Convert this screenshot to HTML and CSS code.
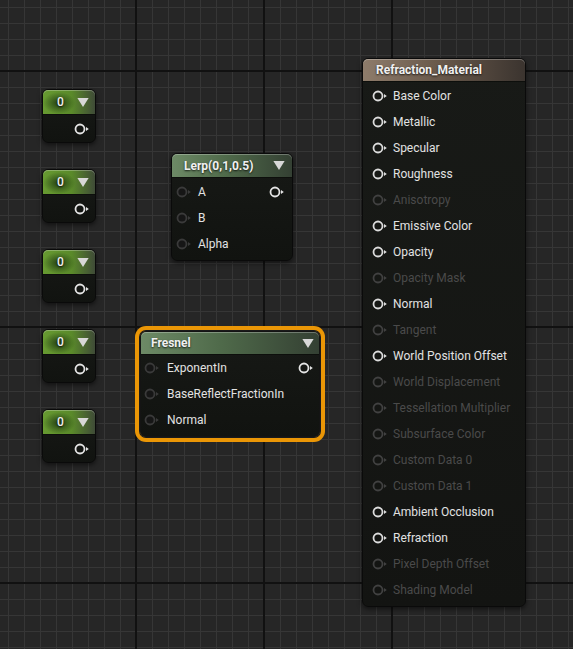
FILE: index.html
```html
<!DOCTYPE html>
<html lang="en">
<head>
    <meta charset="UTF-8">
    <title>Refraction_Material</title>
    <link rel="stylesheet" href="styles.css">
</head>
<body>
    <svg class="defs" width="0" height="0">
        <symbol id="pin" viewBox="0 0 16 12">
            <circle cx="6" cy="6" r="4.5" fill="var(--pin-fill, none)" stroke="currentColor" stroke-width="1.8"/>
            <polygon points="12,4 14.8,6 12,8" fill="currentColor"/>
        </symbol>
        <symbol id="arrow" viewBox="0 0 10 8">
            <polygon points="0,0 10,0 5,8" fill="currentColor"/>
        </symbol>
    </svg>

    <div class="graph">
        <!-- constants -->
        <div class="node const" style="left:42px; top:89px">
            <div class="head green"><span class="title">0</span><svg class="drop"><use href="#arrow"/></svg></div>
            <div class="body out-only"><svg class="pin on"><use href="#pin"/></svg></div>
        </div>
        <div class="node const" style="left:42px; top:169px">
            <div class="head green"><span class="title">0</span><svg class="drop"><use href="#arrow"/></svg></div>
            <div class="body out-only"><svg class="pin on"><use href="#pin"/></svg></div>
        </div>
        <div class="node const" style="left:42px; top:249px">
            <div class="head green"><span class="title">0</span><svg class="drop"><use href="#arrow"/></svg></div>
            <div class="body out-only"><svg class="pin on"><use href="#pin"/></svg></div>
        </div>
        <div class="node const" style="left:42px; top:329px">
            <div class="head green"><span class="title">0</span><svg class="drop"><use href="#arrow"/></svg></div>
            <div class="body out-only"><svg class="pin on"><use href="#pin"/></svg></div>
        </div>
        <div class="node const" style="left:42px; top:409px">
            <div class="head green"><span class="title">0</span><svg class="drop"><use href="#arrow"/></svg></div>
            <div class="body out-only"><svg class="pin on"><use href="#pin"/></svg></div>
        </div>

        <!-- lerp -->
        <div class="node func lerp">
            <div class="head sage"><span class="title">Lerp(0,1,0.5)</span><svg class="drop"><use href="#arrow"/></svg></div>
            <div class="body">
                <div class="row">
                    <div class="input"><svg class="pin off"><use href="#pin"/></svg><span>A</span></div>
                    <svg class="pin on"><use href="#pin"/></svg>
                </div>
                <div class="row"><div class="input"><svg class="pin off"><use href="#pin"/></svg><span>B</span></div></div>
                <div class="row"><div class="input"><svg class="pin off"><use href="#pin"/></svg><span>Alpha</span></div></div>
            </div>
        </div>

        <!-- fresnel (selected) -->
        <div class="node func fresnel selected">
            <div class="head sage"><span class="title">Fresnel</span><svg class="drop"><use href="#arrow"/></svg></div>
            <div class="body">
                <div class="row">
                    <div class="input"><svg class="pin off"><use href="#pin"/></svg><span>ExponentIn</span></div>
                    <svg class="pin on"><use href="#pin"/></svg>
                </div>
                <div class="row"><div class="input"><svg class="pin off"><use href="#pin"/></svg><span>BaseReflectFractionIn</span></div></div>
                <div class="row"><div class="input"><svg class="pin off"><use href="#pin"/></svg><span>Normal</span></div></div>
            </div>
        </div>

        <!-- material result -->
        <div class="node material">
            <div class="head brown"><span class="title">Refraction_Material</span></div>
            <div class="body" id="matInputs"></div>
        </div>
    </div>

    <script>
        const inputs = [
            ['Base Color', 1], ['Metallic', 1], ['Specular', 1], ['Roughness', 1],
            ['Anisotropy', 0], ['Emissive Color', 1], ['Opacity', 1], ['Opacity Mask', 0],
            ['Normal', 1], ['Tangent', 0], ['World Position Offset', 1], ['World Displacement', 0],
            ['Tessellation Multiplier', 0], ['Subsurface Color', 0], ['Custom Data 0', 0],
            ['Custom Data 1', 0], ['Ambient Occlusion', 1], ['Refraction', 1],
            ['Pixel Depth Offset', 0], ['Shading Model', 0]
        ];

        const list = document.getElementById('matInputs');
        inputs.forEach(([name, active]) => {
            const row = document.createElement('div');
            row.className = 'row' + (active ? '' : ' disabled');
            row.innerHTML = `<div class="input"><svg class="pin ring"><use href="#pin"/></svg><span>${name}</span></div>`;
            list.appendChild(row);
        });
    </script>
</body>
</html>
```

FILE: styles.css
```css
body {
    margin: 0;
    padding: 0;
    background: #262626;
    font-family: Roboto, "Liberation Sans", sans-serif;
    font-size: 12px;
    color: #e2e2e2;
    overflow: hidden;
}

.defs {
    position: absolute;
}

.graph {
    position: relative;
    width: 573px;
    height: 649px;
    background-color: #262626;
    background-image:
        linear-gradient(to right,
            transparent 135px, #111 135px, #111 137px, transparent 137px,
            transparent 263px, #111 263px, #111 265px, transparent 265px,
            transparent 391px, #111 391px, #111 393px, transparent 393px),
        linear-gradient(to bottom,
            transparent 70px, #111 70px, #111 72px, transparent 72px,
            transparent 326px, #111 326px, #111 328px, transparent 328px,
            transparent 582px, #111 582px, #111 584px, transparent 584px),
        linear-gradient(to right, #363636 1px, transparent 1px),
        linear-gradient(to bottom, #363636 1px, transparent 1px);
    background-size: 100% 100%, 100% 100%, 16px 16px, 16px 16px;
    background-position: 0 0, 0 0, 8px 0, 0 7px;
}

.node {
    position: absolute;
    display: flex;
    flex-direction: column;
    background: linear-gradient(to bottom, #171916, #111310);
    border: 1px solid #0a0a0a;
    border-radius: 6px;
    box-shadow: 0 2px 5px rgba(0, 0, 0, 0.55);
}

.head {
    height: 24px;
    display: flex;
    align-items: center;
    justify-content: space-between;
    border-radius: 5px 5px 0 0;
    box-shadow: inset 0 1px 0 rgba(255, 255, 255, 0.28);
    border-bottom: 1px solid #0d0f0c;
}

.title {
    font-weight: bold;
    color: #f0f0f0;
    text-shadow: 0 1px 2px rgba(0, 0, 0, 0.8);
}

.drop {
    width: 12px;
    height: 9px;
    color: #d8d8d8;
}

.green {
    background:
        radial-gradient(ellipse 16px 11px at 16px 13px, rgba(24, 48, 14, 0.85), transparent),
        linear-gradient(to right, #679a31, #5a8a2a 55%, #3f4b37);
}

.sage {
    background: linear-gradient(to right, #6d8a66, #4f6a4a 45%, #344033);
}

.brown {
    background: linear-gradient(to right, #8e7c6b, #6a5a4c 45%, #3b342f);
}

/* constants */
.const {
    width: 54px;
    height: 54px;
    box-sizing: border-box;
}

.const .head {
    padding: 0 6px 0 14px;
}

.const .title {
    font-weight: 500;
}

.out-only {
    flex: 1;
    display: flex;
    align-items: center;
    justify-content: flex-end;
    padding: 0 5px 0 0;
}

/* pins */
.pin {
    width: 16px;
    height: 12px;
    flex: none;
}

.pin.on {
    color: #e4e4e4;
}

.pin.off {
    color: #3a3a3a;
    --pin-fill: #161616;
}

.pin.ring {
    color: #dcdcdc;
}

.row {
    height: 26px;
    display: flex;
    align-items: center;
    justify-content: space-between;
}

.input {
    display: flex;
    align-items: center;
    gap: 6px;
}

/* lerp */
.lerp {
    left: 171px;
    top: 153px;
    width: 120px;
}

.lerp .head {
    height: 23px;
    padding: 0 7px 0 12px;
}

.lerp .body {
    padding: 1px 0 3px;
}

.lerp .row {
    padding: 0 7px 0 4px;
}

/* fresnel */
.fresnel {
    left: 140px;
    top: 331px;
    width: 178px;
}

.fresnel .head {
    height: 22px;
    padding: 0 5px 0 10px;
}

.fresnel .body {
    padding: 0 0 3px;
}

.fresnel .row {
    padding: 0 5px 0 3px;
}

.fresnel .input {
    gap: 7px;
}

.selected {
    border-color: #141414;
    box-shadow: 0 0 0 1px #1a1a1a, 0 0 0 5px #ea9606;
}

/* material result */
.material {
    left: 362px;
    top: 58px;
    width: 162px;
    background: linear-gradient(to bottom, #181a17, #131412);
}

.material .head {
    height: 22px;
    padding: 0 0 0 13px;
}

.material .body {
    padding: 1px 0 3px 9px;
}

.material .input {
    gap: 5px;
}

.material .row.disabled span {
    color: #4a4a4a;
}

.material .row.disabled .pin {
    color: #414141;
}
```
